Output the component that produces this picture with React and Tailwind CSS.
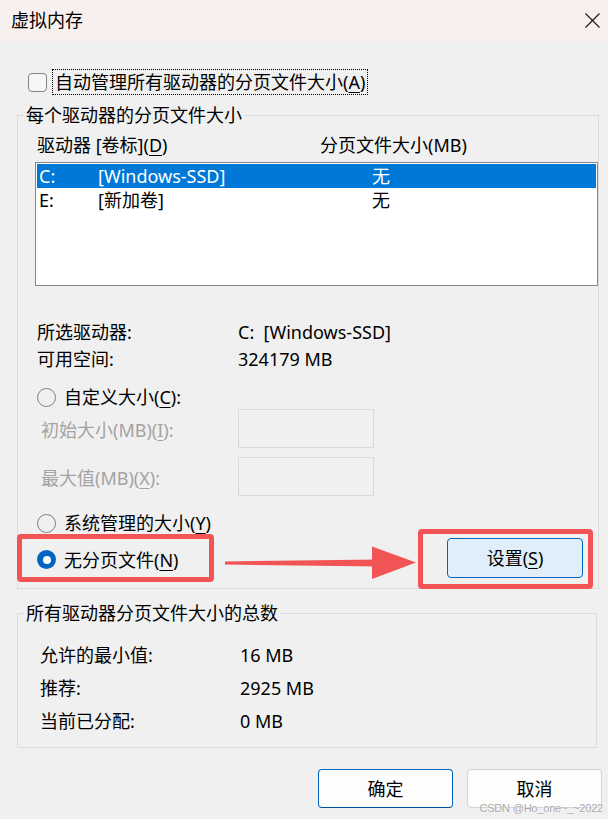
import React from "react";

function Radio({ checked = false }) {
  if (checked) {
    return (
      <span className="flex h-[19px] w-[19px] shrink-0 items-center justify-center rounded-full bg-[#0067c0]">
        <span className="h-[8px] w-[8px] rounded-full bg-white" />
      </span>
    );
  }
  return <span className="h-[19px] w-[19px] shrink-0 rounded-full border-[1.5px] border-[#7f7f7f]" />;
}

function InfoRow({ label, value, h = "h-[27px]", labelW = "w-[201px]" }) {
  return (
    <div className={`flex items-center ${h}`}>
      <span className={labelW}>{label}</span>
      <span className="whitespace-pre">{value}</span>
    </div>
  );
}

export default function App() {
  return (
    <div className="relative h-[819px] w-[608px] overflow-hidden bg-[#f0f0f0] font-['Noto_Sans','Noto_Sans_CJK_SC',sans-serif] text-[18px] leading-[24px] text-black">
      {/* title bar */}
      <div className="flex h-[42px] items-center justify-between bg-[#f8f0ee] pb-[2px] pl-[11px] pr-[8px]">
        <span>虚拟内存</span>
        <svg width="15" height="15" viewBox="0 0 15 15">
          <path d="M0.5 0.5 L14.5 14.5 M14.5 0.5 L0.5 14.5" stroke="#1b1b1b" strokeWidth="1.2" fill="none" />
        </svg>
      </div>

      {/* auto manage checkbox */}
      <div className="ml-[28px] mt-[27px] flex h-[26px] items-center">
        <span className="h-[19px] w-[19px] rounded-[4px] border border-[#858585] bg-[#f6f6f6]" />
        <span className="ml-[5px] flex h-[26px] items-center border border-dotted border-black px-[2px]">
          自动管理所有驱动器的分页文件大小(<u className="underline-offset-[3px]">A</u>)
        </span>
      </div>

      {/* per drive group */}
      <fieldset className="ml-[17px] mt-[8px] w-[580px] border border-[#dcdcdc]">
        <legend className="ml-[6px] px-[2px] leading-[24px]">每个驱动器的分页文件大小</legend>
        <div className="pb-[10px] pl-[17px] pt-[6px]">
          <div className="ml-[2px] flex h-[24px] items-center">
            <span className="w-[283px]">
              驱动器 [卷标](<u className="underline-offset-[3px]">D</u>)
            </span>
            <span>分页文件大小(MB)</span>
          </div>

          <div className="mt-[5px] h-[124px] w-[563px] border border-[#828790] bg-white p-[1px]">
            <div className="flex h-[24px] items-center bg-[#0078d7] pl-[2px] text-white">
              <span className="w-[59px]">C:</span>
              <span className="w-[274px]">[Windows-SSD]</span>
              <span>无</span>
            </div>
            <div className="flex h-[24px] items-center pl-[2px]">
              <span className="w-[59px]">E:</span>
              <span className="w-[274px]">[新加卷]</span>
              <span>无</span>
            </div>
          </div>

          <div className="ml-[2px]">
            <div className="mt-[32px]">
              <InfoRow label="所选驱动器:" value="C:  [Windows-SSD]" />
              <InfoRow label="可用空间:" value="324179 MB" />
            </div>

            <div className="mt-[13px] flex h-[24px] items-center gap-[8px]">
              <Radio />
              <span>
                自定义大小(<u className="underline-offset-[3px]">C</u>):
              </span>
            </div>
            <div className="flex h-[39px] items-center text-[#a3a3a3]">
              <span className="w-[201px] pl-[4px] pt-[3px]">
                初始大小(MB)(<u className="underline-offset-[3px]">I</u>):
              </span>
              <span className="h-[39px] w-[136px] border border-[#dadada]" />
            </div>
            <div className="mt-[9px] flex h-[39px] items-center text-[#a3a3a3]">
              <span className="w-[201px] pl-[4px] pt-[3px]">
                最大值(MB)(<u className="underline-offset-[3px]">X</u>):
              </span>
              <span className="h-[39px] w-[136px] border border-[#dadada]" />
            </div>

            <div className="mt-[15px] flex h-[24px] items-center gap-[8px]">
              <Radio />
              <span>
                系统管理的大小(<u className="underline-offset-[3px]">Y</u>)
              </span>
            </div>

            <div className="mt-[3px] flex h-[40px] items-center">
              <div className="flex w-[410px] items-center gap-[8px] pt-[3px]">
                <Radio checked />
                <span>
                  无分页文件(<u className="underline-offset-[3px]">N</u>)
                </span>
              </div>
              <button className="flex h-[40px] w-[136px] items-center justify-center rounded-[4px] border border-[#0067c0] bg-[#e0eef9]">
                设置(<u className="underline-offset-[3px]">S</u>)
              </button>
            </div>
          </div>
        </div>
      </fieldset>

      {/* totals group */}
      <fieldset className="ml-[17px] mt-[12px] w-[580px] border border-[#dcdcdc]">
        <legend className="ml-[6px] px-[2px] leading-[24px]">所有驱动器分页文件大小的总数</legend>
        <div className="pb-[10px] pl-[22px] pt-[13px]">
          <InfoRow h="h-[33px]" labelW="w-[200px]" label="允许的最小值:" value="16 MB" />
          <InfoRow h="h-[33px]" labelW="w-[200px]" label="推荐:" value="2925 MB" />
          <InfoRow h="h-[33px]" labelW="w-[200px]" label="当前已分配:" value="0 MB" />
        </div>
      </fieldset>

      {/* dialog buttons */}
      <div className="mt-[21px] flex justify-end gap-[14px] pr-[6px]">
        <button className="h-[39px] w-[135px] rounded-[4px] border border-[#0067c0] border-b-[#00509a] bg-[#fdfdfd]">确定</button>
        <button className="h-[39px] w-[135px] rounded-[4px] border border-[#d3d3d3] bg-[#fdfdfd]">取消</button>
      </div>

      {/* red annotations */}
      <div className="absolute left-[17px] top-[534px] h-[48px] w-[197px] rounded-[4px] border-[5px] border-[#f25456]" />
      <div className="absolute left-[418px] top-[529px] h-[60px] w-[175px] rounded-[4px] border-[5px] border-[#f25456]" />
      <svg className="absolute left-[220px] top-[540px]" width="200" height="45" viewBox="220 540 200 45">
        <polygon points="225,561.5 378,559.5 378,566.5 225,564.5" fill="#f25456" />
        <polygon points="372,546.5 416,562.5 372,579" fill="#f25456" />
      </svg>

      {/* watermark */}
      <span className="absolute right-[5px] top-[801px] whitespace-nowrap font-['Liberation_Sans',sans-serif] text-[11px] leading-[14px] tracking-[-0.2px] text-[#a8a8a8] [text-shadow:0_0_2px_#fff,0_0_2px_#fff]">
        CSDN @Ho_one~_~2022
      </span>
    </div>
  );
}
